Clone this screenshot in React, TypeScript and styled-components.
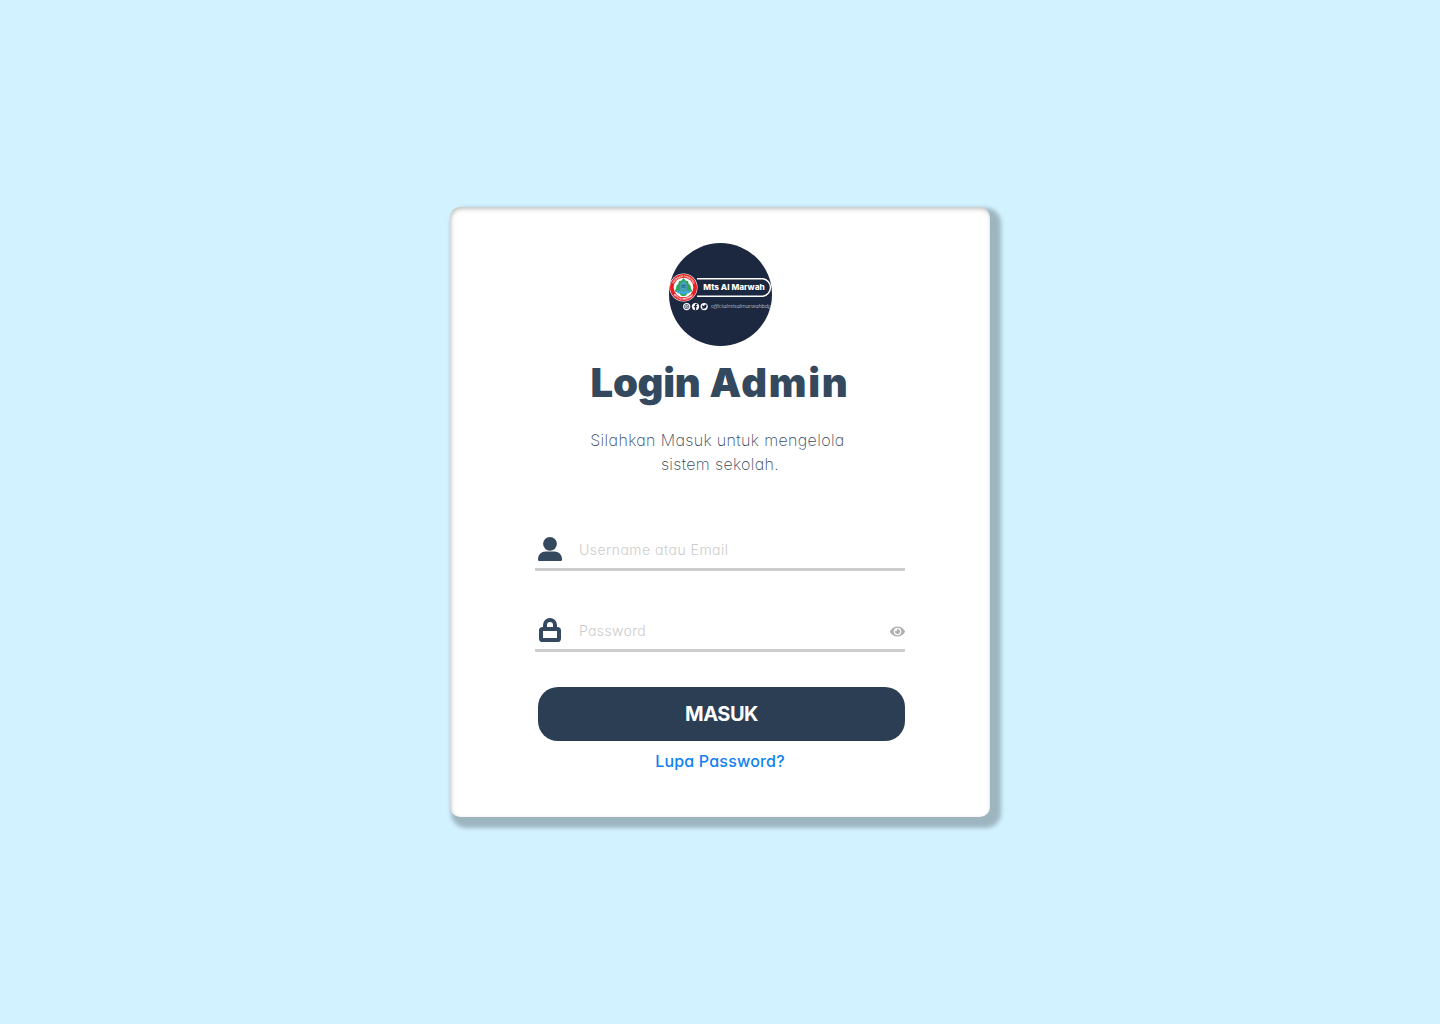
import React from "react";
import styled, { createGlobalStyle } from "styled-components";

const GlobalStyle = createGlobalStyle`
  * { box-sizing: border-box; }
  body { margin: 0; background: #d2f2ff; }
  body, input, button { font-family: Inter, "Open Sans", sans-serif; font-feature-settings: "cv11"; }
`;

const Page = styled.main`
  min-height: 1024px;
  display: flex;
  justify-content: center;
  align-items: center;
  background: #d2f2ff;
`;

const Card = styled.section`
  width: 540px;
  height: 610px;
  padding: 36px 85px 0;
  display: flex;
  flex-direction: column;
  align-items: center;
  background: #fff;
  border-radius: 10px;
  box-shadow: 6px 6px 4px 5px rgba(0, 0, 0, 0.25), inset 1px 2px 4px 0 rgba(0, 0, 0, 0.25);
`;

const LogoSvg = styled.svg`
  display: block;
  width: 104px;
  height: 104px;
  flex: none;
`;

const Title = styled.h1`
  margin: 6px 0 0;
  height: 60px;
  line-height: 60px;
  display: flex;
  gap: 9px;
  font-size: 40px;
  font-weight: 900;
  white-space: nowrap;
  color: #34495e;
`;

const TitleWord = styled.span<{ $spacing: number }>`
  letter-spacing: ${(p) => p.$spacing}px;
`;

const Intro = styled.p`
  margin: 15px 0 0;
  display: flex;
  flex-direction: column;
  align-items: center;
  font-size: 16px;
  line-height: 24px;
  font-weight: 200;
  color: #34495e;
`;

const IntroLine = styled.span<{ $spacing: number; $shift?: number }>`
  letter-spacing: ${(p) => p.$spacing}px;
  padding-right: ${(p) => p.$shift ?? 0}px;
  white-space: nowrap;
`;

const Form = styled.form`
  width: 370px;
  margin-top: 51px;
  display: flex;
  flex-direction: column;
`;

const Field = styled.label`
  height: 44px;
  margin-bottom: 37px;
  display: flex;
  align-items: center;
  gap: 14px;
  padding: 0 0 1px;
  background: linear-gradient(#cccccc, #cccccc) bottom / 100% 3px no-repeat;
  border-radius: 1px;
`;

const FieldIcon = styled.svg`
  width: 30px;
  height: 30px;
  flex: none;
  color: #34495e;
`;

const Input = styled.input<{ $spacing: number }>`
  flex: 1;
  min-width: 0;
  height: 30px;
  padding: 2px 0 0;
  border: 0;
  outline: 0;
  background: transparent;
  font-size: 14px;
  letter-spacing: ${(p) => p.$spacing}px;
  color: #34495e;
  &::placeholder { color: #cccccc; opacity: 1; font-weight: 350; }
`;

const EyeIcon = styled.svg`
  width: 15px;
  height: 15px;
  flex: none;
  margin-top: 4px;
  color: #b0b0b0;
`;

const Submit = styled.button`
  width: 367px;
  height: 54px;
  margin: -2px 0 0 3px;
  padding: 0;
  border: 0;
  border-radius: 20px;
  background: #2b3e54;
  color: #fff;
  font-size: 20px;
  line-height: 54px;
  font-weight: 700;
  letter-spacing: -0.5px;
`;

const Forgot = styled.a`
  margin-top: 8px;
  line-height: 24px;
  font-size: 16px;
  font-weight: 500;
  letter-spacing: 0.2px;
  color: #1081f0;
  text-decoration: none;
  text-align: center;
`;

function Logo() {
  return (
    <LogoSvg viewBox="0 0 104 104" role="img" aria-label="Mts Al Marwah">
      <defs>
        <clipPath id="disc"><circle cx="52.5" cy="51.5" r="51.5" /></clipPath>
        <path id="ringTop" d="M5.1 44.5a10.4 10.4 0 0 1 20.8 0" />
        <path id="ringBottom" d="M3.2 44.5a12.3 12.3 0 0 0 24.6 0" />
      </defs>
      <g clipPath="url(#disc)">
        <rect width="104" height="104" fill="#1c2740" />
        <path d="M29 35.8H95a8.8 8.8 0 0 1 0 17.4H29" fill="none" stroke="#fff" strokeWidth="1.4" />
        <circle cx="15.5" cy="44.5" r="14" fill="#fff" />
        <circle cx="15.5" cy="44.5" r="13.5" fill="#e81f24" />
        <g fill="#fff" fontSize="2.5" fontWeight="700">
          <text><textPath href="#ringTop" startOffset="50%" textAnchor="middle">YAYASAN TARBIYAH</textPath></text>
          <text><textPath href="#ringBottom" startOffset="50%" textAnchor="middle">MTS AL MARWAH</textPath></text>
        </g>
        <circle cx="15.5" cy="44.5" r="9.8" fill="#fff" />
        <path d="M15.5 35l2 2.4 2.6.8.6 2.6 1.8 1.6.4 2.6 1.4 3.4-4.2 1.2-2 2.8-2.6.8-2.6-.8-2-2.8-4.2-1.2 1.4-3.4.4-2.6 1.8-1.6.6-2.6 2.6-.8z" fill="#2fa653" />
        <path d="M15.5 37.8q3.4 1.8 3.4 4.8v5h-6.8v-5q0-3 3.4-4.8z" fill="#4a9ec4" />
        <path d="M13.4 42.3h4.2M13.4 44.1h4.2" stroke="#174f68" strokeWidth=".7" />
        <path d="M8 47.6q4.2-.6 7.5 1.2 3.3-1.8 7.5-1.2l-1.8 2.8q-3.2-.4-5.7 1-2.5-1.4-5.7-1z" fill="#42a7e8" />
        <text x="35.3" y="47.4" fill="#fff" fontSize="7.4" fontWeight="800" textLength="61.5" lengthAdjust="spacingAndGlyphs" style={{ fontFeatureSettings: "normal" }}>Mts Al Marwah</text>
        <g fill="#fff">
          <circle cx="18.7" cy="63.6" r="3.6" />
          <circle cx="27.5" cy="63.6" r="3.6" />
          <circle cx="36.2" cy="63.6" r="3.6" />
        </g>
        <g transform="translate(.7 .1)">
          <g fill="none" stroke="#1c2740" strokeWidth=".7">
            <rect x="16" y="61.5" width="4" height="4" rx="1.2" />
            <circle cx="18" cy="63.5" r=".9" />
          </g>
          <path d="M26.2 67.1v-3h-1v-1.2h1v-.8q0-1.4 1.4-1.4h.9v1.2h-.6q-.4 0-.4.4v.6h1l-.2 1.2h-.8v3z" fill="#1c2740" />
          <path d="M33.3 61.8q1 1.1 2.2 1.1 0-1.5 1.2-1.5.5 0 .8.3l.7-.2-.4.8q0 3.2-3 3.4-1.1 0-1.9-.5.8 0 1.4-.4-.8-.2-1-.9l.4-.1q-.8-.4-.4-2z" fill="#1c2740" />
        </g>
        <text x="42.8" y="65.3" fill="#d3d7df" fontSize="4.8" fontWeight="300" fontStyle="italic" textLength="60.5" lengthAdjust="spacingAndGlyphs">officialmtsalmarwahbdg</text>
      </g>
    </LogoSvg>
  );
}

export default function App() {
  return (
    <>
      <GlobalStyle />
      <Page>
        <Card>
          <Logo />
          <Title>
            <TitleWord $spacing={-0.3}>Login</TitleWord>{" "}
            <TitleWord $spacing={1.7}>Admin</TitleWord>
          </Title>
          <Intro>
            <IntroLine $spacing={0.37} $shift={5}>Silahkan Masuk untuk mengelola</IntroLine>
            <IntroLine $spacing={0.35}>sistem sekolah.</IntroLine>
          </Intro>
          <Form>
            <Field>
              <FieldIcon viewBox="0 0 30 30" fill="currentColor">
                <circle cx="15" cy="9.8" r="6.9" />
                <path d="M3 25.4c0-5 3.6-7.9 7.5-7.9h9c3.9 0 7.5 2.9 7.5 7.9 0 1-.6 1.5-1.5 1.5h-21c-.9 0-1.5-.5-1.5-1.5z" />
              </FieldIcon>
              <Input $spacing={0.48} placeholder="Username atau Email" />
            </Field>
            <Field>
              <FieldIcon viewBox="0 0 30 30" fill="none" stroke="currentColor" strokeWidth="4">
                <path d="M10 14V10a5 5 0 0 1 10 0v4" />
                <rect x="6" y="14" width="18" height="11" rx="1.6" />
              </FieldIcon>
              <Input $spacing={0.35} placeholder="Password" type="password" />
              <EyeIcon viewBox="0 0 576 512" fill="currentColor">
                <path d="M572.52 241.4C518.29 135.59 410.93 64 288 64S57.68 135.64 3.48 241.41a32.35 32.35 0 0 0 0 29.19C57.71 376.41 165.07 448 288 448s230.32-71.64 284.52-177.41a32.35 32.35 0 0 0 0-29.19zM288 400a144 144 0 1 1 144-144 143.93 143.93 0 0 1-144 144zm0-240a95.31 95.31 0 0 0-25.31 3.79 47.85 47.85 0 0 1-66.9 66.9A95.78 95.78 0 1 0 288 160z" />
              </EyeIcon>
            </Field>
            <Submit type="button">MASUK</Submit>
            <Forgot href="#">Lupa Password?</Forgot>
          </Form>
        </Card>
      </Page>
    </>
  );
}
